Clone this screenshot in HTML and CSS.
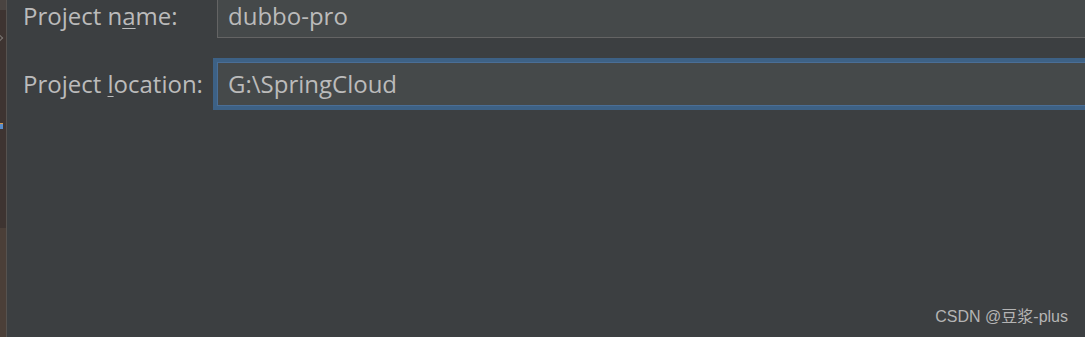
FILE: index.html
```html
<!DOCTYPE html>
<html>
<head>
  <title>New Project</title>
  <link rel="stylesheet" href="styles.css">
</head>
<body>
  <div class="window">
    <div class="side">
      <div class="side-top"></div>
      <div class="side-mid"><span class="chev"></span><span class="mini-icon"></span></div>
      <div class="side-low"></div>
    </div>
    <div class="main">
      <div class="form">
        <label class="label">Project n<u>a</u>me:</label>
        <div class="field">dubbo-pro</div>
        <label class="label">Project <u>l</u>ocation:</label>
        <div class="field focused">G:\SpringCloud</div>
      </div>
      <div class="mark">CSDN @豆浆-plus</div>
    </div>
  </div>
</body>
</html>
```

FILE: styles.css
```css
html, body { margin: 0; height: 100%; overflow: hidden; background: #3c3f41; }
.window { display: flex; height: 100%; position: relative; }

.side { width: 6px; border-right: 1px solid #56524f; display: flex; flex-direction: column; overflow: hidden; }
.side-top { height: 10px; background: #4a4441; }
.side-mid { height: 218px; background: #3e3431; position: relative; }
.side-low { flex: 1; background: #4b3f38; }
.chev { position: absolute; left: -4px; top: 25px; width: 5px; height: 5px; border-top: 1px solid #7a7572; border-right: 1px solid #7a7572; transform: rotate(45deg); }
.mini-icon { position: absolute; left: 0; top: 113px; width: 3px; height: 5px; background: #5a8cc8; border-top: 1px solid #d99a4a; }

.main { flex: 1; padding-left: 16px; font-family: "Open Sans", "Noto Sans", sans-serif; font-size: 24px; color: #bbbbbb; }
.form { display: grid; grid-template-columns: 194px 1fr; row-gap: 24px; margin-top: -6px; margin-right: -40px; align-items: center; }
.label { line-height: 44px; white-space: nowrap; }
.label u { text-decoration-thickness: 1px; text-underline-offset: 3px; }
.field { height: 42px; line-height: 42px; background: #45494a; border: 1px solid #646464; padding-left: 10px; }
.field.focused { border-color: #4a6e96; box-shadow: 0 0 0 4px #3d6185; }

.mark { position: absolute; right: 17px; bottom: 10px; font: 16px "Liberation Sans", "Noto Sans CJK SC", sans-serif; color: #b4b4b4; }
```
